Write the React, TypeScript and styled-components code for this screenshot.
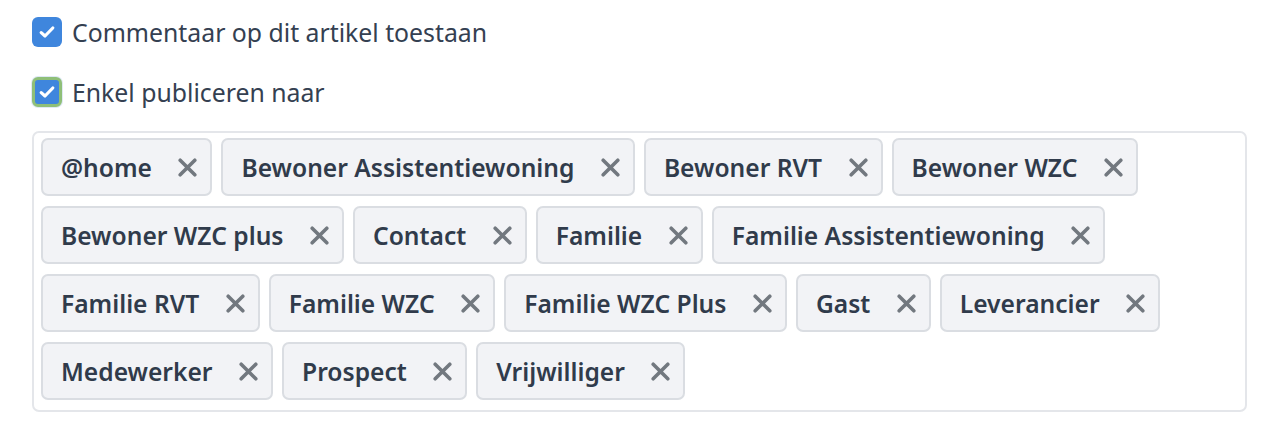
import React from "react";
import styled, { createGlobalStyle, css } from "styled-components";

const GlobalStyle = createGlobalStyle`
  html, body { margin: 0; padding: 0; background: #ffffff; }
  body { font-family: "Noto Sans", "Open Sans", sans-serif; color: #333d4c; }
`;

const Page = styled.div`
  padding: 12px 33px 0 32px;
  display: flex;
  flex-direction: column;
`;

const CheckRow = styled.label<{ $spaced?: boolean }>`
  display: flex;
  align-items: center;
  gap: 10px;
  height: 40px;
  margin-bottom: ${(p) => (p.$spaced ? "19px" : "20px")};
  font-size: 24.8px;
  font-weight: 400;
  color: #344051;
`;

const Box = styled.span<{ $focused?: boolean }>`
  width: 30px;
  height: 30px;
  box-sizing: border-box;
  border-radius: 6px;
  background: #3f86dd;
  display: flex;
  align-items: center;
  justify-content: center;
  ${(p) =>
    p.$focused &&
    css`
      border: 3px solid #8fbf78;
      box-shadow: 0 0 0 1px #dfe9f5;
    `}
`;

const TagBox = styled.div`
  border: 2px solid #e4e6ea;
  border-radius: 7px;
  padding: 5px 7px 10px 7px;
  display: flex;
  flex-wrap: wrap;
  gap: 10px 9px;
  box-sizing: border-box;
`;

const Tag = styled.div`
  display: flex;
  align-items: center;
  height: 58px;
  box-sizing: border-box;
  border: 2px solid #dadde2;
  border-radius: 7px;
  background: #f2f3f6;
  padding: 0 13px 0 18px;
  font-size: 24.6px;
  font-weight: 600;
  color: #303b4b;
  white-space: nowrap;
`;

const TagLabel = styled.span`
  margin-right: 26.5px;
`;

const Remove = styled.span`
  width: 19px;
  height: 19px;
  display: flex;
`;

const Check = () => (
  <svg width="18" height="18" viewBox="0 0 18 18" fill="none">
    <path d="M3.2 9.6 L7 13 L14.8 5" stroke="#ffffff" strokeWidth="3.2" strokeLinecap="round" strokeLinejoin="round" />
  </svg>
);

const XIcon = () => (
  <svg width="19" height="19" viewBox="0 0 19 19" fill="none">
    <path d="M2.2 2.2 L16.8 16.8 M16.8 2.2 L2.2 16.8" stroke="#72787f" strokeWidth="3.6" strokeLinecap="round" />
  </svg>
);

const tags = [
  "@home",
  "Bewoner Assistentiewoning",
  "Bewoner RVT",
  "Bewoner WZC",
  "Bewoner WZC plus",
  "Contact",
  "Familie",
  "Familie Assistentiewoning",
  "Familie RVT",
  "Familie WZC",
  "Familie WZC Plus",
  "Gast",
  "Leverancier",
  "Medewerker",
  "Prospect",
  "Vrijwilliger",
];

export default function App() {
  return (
    <>
      <GlobalStyle />
      <Page>
        <CheckRow>
          <Box>
            <Check />
          </Box>
          Commentaar op dit artikel toestaan
        </CheckRow>
        <CheckRow $spaced>
          <Box $focused>
            <Check />
          </Box>
          Enkel publiceren naar
        </CheckRow>
        <TagBox>
          {tags.map((t) => (
            <Tag key={t}>
              <TagLabel>{t}</TagLabel>
              <Remove>
                <XIcon />
              </Remove>
            </Tag>
          ))}
        </TagBox>
      </Page>
    </>
  );
}
